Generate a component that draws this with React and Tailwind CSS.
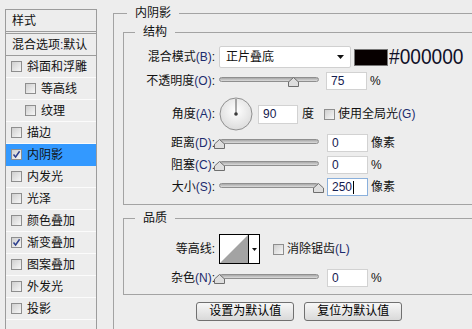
import React from 'react';

const styles = [
  { name: '斜面和浮雕' },
  { name: '等高线', indent: true },
  { name: '纹理', indent: true },
  { name: '描边' },
  { name: '内阴影', checked: true, active: true },
  { name: '内发光' },
  { name: '光泽' },
  { name: '颜色叠加' },
  { name: '渐变叠加', checked: true },
  { name: '图案叠加' },
  { name: '外发光' },
  { name: '投影' },
  { name: '' },
];

const labelCls = 'w-[91px] shrink-0 text-right whitespace-nowrap';

const Key = ({ k }) => <span className="text-[#1c2b6e]">({k})</span>;

const Check = ({ checked }) => (
  <span className="w-[11px] h-[11px] shrink-0 border border-[#8e8e8e] bg-linear-to-br from-[#cfcfcf] to-[#f7f7f7] flex items-center justify-center">
    {checked && (
      <svg width="9" height="9" viewBox="0 0 9 9">
        <path d="M1.5 4.5 L3.6 7 L7.6 1.3" fill="none" stroke="#2d3f8e" strokeWidth="1.5" />
      </svg>
    )}
  </span>
);

// slider track 100px wide, thumb placed from value
const Slider = ({ value, max }) => {
  const pos = Math.round((value / max) * 99);
  return (
    <div className="relative ml-[4px] w-[100px] h-[12px] shrink-0">
      <div className="mt-[2px] h-[5px] rounded-full border border-[#8f8f8f] bg-linear-to-b from-[#a8a8a8] to-[#dcdcdc]" />
      <svg className="absolute top-[2px]" style={{ left: pos - 5 }} width="11" height="10" viewBox="0 0 11 10">
        <path d="M5.5 0.5 L10.5 5 L10.5 9.5 L0.5 9.5 L0.5 5 Z" fill="#dedede" stroke="#6e6e6e" />
      </svg>
    </div>
  );
};

const Field = ({ value, unit, focus, ml = 'ml-[8px]' }) => (
  <>
    <div
      className={`${ml} w-[41px] h-[18px] shrink-0 bg-white border ${
        focus ? 'border-[#8ab0dc]' : 'border-[#d2d2d2]'
      } flex items-center pl-[4px] text-[#15204f]`}
    >
      {value}
      {focus && <span className="ml-px w-px h-[13px] bg-black" />}
    </div>
    {unit && <span className="ml-[3px] whitespace-nowrap">{unit}</span>}
  </>
);

const Dial = () => (
  <svg width="34" height="34" viewBox="0 0 34 34" className="ml-[4px] shrink-0">
    <defs>
      <radialGradient id="dialFill" cx="50%" cy="40%" r="60%">
        <stop offset="0%" stopColor="#ffffff" />
        <stop offset="100%" stopColor="#dcdcdc" />
      </radialGradient>
    </defs>
    <circle cx="17" cy="17" r="16" fill="url(#dialFill)" stroke="#909090" />
    <line x1="17" y1="17" x2="17" y2="2" stroke="#5a5a5a" strokeWidth="1" />
    <circle cx="17" cy="17" r="1.8" fill="#3a3a3a" />
  </svg>
);

const Button = ({ children }) => (
  <button className="w-[98px] h-[19px] rounded-[3px] border border-[#707070] bg-linear-to-b from-[#f7f7f7] to-[#d9d9d9] text-[12px] leading-[17px] text-black">
    {children}
  </button>
);

export default function App() {
  return (
    <div className="w-[472px] h-[329px] overflow-hidden bg-[#ededed] flex items-start text-[12px] leading-[16px] text-[#111] font-['Liberation_Sans','Noto_Sans_CJK_SC',sans-serif]">
      {/* style list */}
      <div className="ml-[5px] mt-[9px] w-[92px] h-[340px] shrink-0 border border-[#9c9c9c]">
        <div className="h-[22px] pl-[6px] flex items-center border-b border-[#9c9c9c]">样式</div>
        <div className="mt-px h-[23px] pl-[6px] flex items-center border-y border-[#9c9c9c] whitespace-nowrap">
          混合选项<span className="text-[#1c2b6e]">:</span>默认
        </div>
        {styles.map((s, i) => (
          <div
            key={i}
            className={`h-[22px] flex items-center border-b ${
              s.active ? 'bg-[#3399ff] border-[#3399ff]' : 'border-[#fbfbfb]'
            } ${s.indent ? 'pl-[19px]' : 'pl-[5px]'}`}
          >
            {s.name && (
              <>
                <Check checked={s.checked} />
                <span className="ml-[5px] whitespace-nowrap">{s.name}</span>
              </>
            )}
          </div>
        ))}
      </div>

      {/* inner shadow options */}
      <fieldset className="ml-[16px] mt-[5px] w-[355px] h-[340px] shrink-0 border border-[#a3a3a3]">
        <legend className="ml-[13px] px-[8px] leading-[17px]">内阴影</legend>

        <fieldset className="mx-[9px] mt-[2px] h-[181px] border border-[#a3a3a3]">
          <legend className="ml-[11px] px-[8px] leading-[17px]">结构</legend>

          <div className="mt-[5px] h-[22px] flex items-center">
            <span className={labelCls}>混合模式<Key k="B" />:</span>
            <div className="ml-[4px] w-[132px] h-[22px] shrink-0 bg-white border border-[#d0d0d0] rounded-[2px] flex items-center justify-between pl-[6px] pr-[6px]">
              <span>正片叠底</span>
              <svg width="7" height="4" viewBox="0 0 7 4">
                <path d="M0 0 H7 L3.5 4 Z" fill="#111" />
              </svg>
            </div>
            <div className="ml-[3px] w-[34px] h-[17px] shrink-0 bg-[#070000] border border-[#777]" />
            <span className="ml-[1px] shrink-0 whitespace-nowrap text-[22px] leading-[22px] text-[#101028] origin-left scale-x-[0.87]">
              #000000
            </span>
          </div>

          <div className="mt-[4px] h-[18px] flex items-center">
            <span className={labelCls}>不透明度<Key k="O" />:</span>
            <Slider value={75} max={100} />
            <Field value="75" unit="%" ml="ml-[7px]" />
          </div>

          <div className="mt-[7px] h-[34px] flex items-center">
            <span className={labelCls}>角度<Key k="A" />:</span>
            <Dial />
            <div className="ml-[5px] w-[40px] h-[19px] shrink-0 bg-white border border-[#d2d2d2] flex items-center pl-[4px] text-[#15204f]">
              90
            </div>
            <span className="ml-[4px]">度</span>
            <span className="ml-[10px]"><Check /></span>
            <span className="ml-[3px] whitespace-nowrap">使用全局光<Key k="G" /></span>
          </div>

          <div className="mt-[3px] h-[18px] flex items-center">
            <span className={labelCls}>距离<Key k="D" />:</span>
            <Slider value={0} max={100} />
            <Field value="0" unit="像素" />
          </div>

          <div className="mt-[4px] h-[18px] flex items-center">
            <span className={labelCls}>阻塞<Key k="C" />:</span>
            <Slider value={0} max={100} />
            <Field value="0" unit="%" />
          </div>

          <div className="mt-[4px] h-[18px] flex items-center">
            <span className={labelCls}>大小<Key k="S" />:</span>
            <Slider value={250} max={250} />
            <Field value="250" unit="像素" focus />
          </div>
        </fieldset>

        <fieldset className="mx-[9px] mt-[5px] h-[85px] border border-[#a3a3a3]">
          <legend className="ml-[11px] px-[8px] leading-[17px]">品质</legend>

          <div className="mt-[7px] h-[30px] flex items-center">
            <span className={labelCls}>等高线:</span>
            <div className="ml-[4px] w-[41px] h-[30px] shrink-0 border border-black bg-white flex">
              <svg width="28" height="28" viewBox="0 0 28 28" className="shrink-0">
                <path d="M0 28 L28 0 L28 28 Z" fill="#a3a3a3" />
              </svg>
              <div className="flex-1 border-l border-black flex items-center justify-center">
                <svg width="5" height="3" viewBox="0 0 5 3">
                  <path d="M0 0 H5 L2.5 3 Z" fill="#111" />
                </svg>
              </div>
            </div>
            <span className="ml-[13px]"><Check /></span>
            <span className="ml-[3px] whitespace-nowrap">消除锯齿<Key k="L" /></span>
          </div>

          <div className="mt-[5px] h-[18px] flex items-center">
            <span className={labelCls}>杂色<Key k="N" />:</span>
            <Slider value={0} max={100} />
            <Field value="0" unit="%" />
          </div>
        </fieldset>

        <div className="mt-[7px] flex justify-center gap-[10px]">
          <Button>设置为默认值</Button>
          <Button>复位为默认值</Button>
        </div>
      </fieldset>
    </div>
  );
}
